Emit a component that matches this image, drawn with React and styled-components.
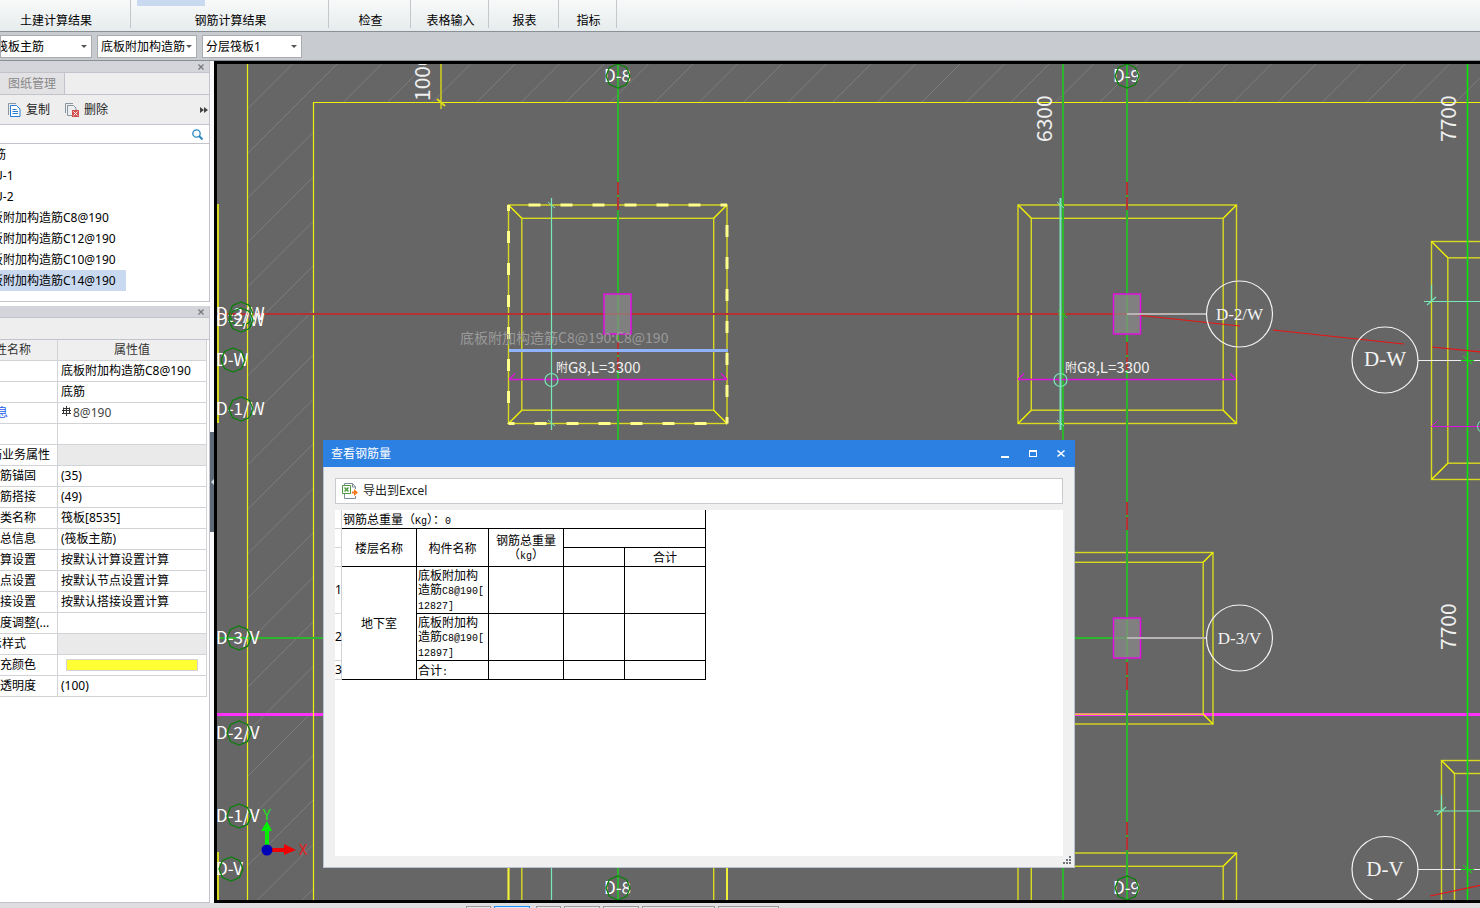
import { useId } from 'react';
import styled, { createGlobalStyle } from 'styled-components';

const ribbonGroups = [
  { label: '土建计算结果', width: 131, tail: 20 },
  { label: '钢筋计算结果', width: 198, active: true },
  { label: '检查', width: 82 },
  { label: '表格输入', width: 78 },
  { label: '报表', width: 70 },
  { label: '指标', width: 58 },
];

const components = [
  { name: '筋', shift: 6 },
  { name: 'U-1', shift: 6 },
  { name: 'U-2', shift: 6 },
  { name: '板附加构造筋C8@190', shift: 9 },
  { name: '板附加构造筋C12@190', shift: 9 },
  { name: '板附加构造筋C10@190', shift: 9 },
  { name: '板附加构造筋C14@190', shift: 9, selected: true },
];

const properties = [
  { name: '', value: '底板附加构造筋C8@190' },
  { name: '', value: '底筋' },
  { name: '息', shift: 4, value: '8@190', rebar: true },
  { name: '', value: '' },
  { name: '筋业务属性', shift: 10, group: true },
  { name: '筋锚固', value: '(35)' },
  { name: '筋搭接', value: '(49)' },
  { name: '类名称', value: '筏板[8535]' },
  { name: '总信息', value: '(筏板主筋)' },
  { name: '算设置', value: '按默认计算设置计算' },
  { name: '点设置', value: '按默认节点设置计算' },
  { name: '接设置', value: '按默认搭接设置计算' },
  { name: '度调整(...', value: '' },
  { name: '示样式', shift: 10, group: true },
  { name: '充颜色', swatch: true },
  { name: '透明度', value: '(100)' },
];

const statusButtons = [25, 36, 25, 36, 36, 73, 61];

export default function App() {
  return (
    <>
      <GlobalStyle />
      <Page>
        <Ribbon>
          {ribbonGroups.map(group => (
            <RibbonGroup key={group.label} $width={group.width} $tail={group.tail}>
              {group.active && <ActiveMark />}
              <RibbonButton type='button'>{group.label}</RibbonButton>
            </RibbonGroup>
          ))}
        </Ribbon>
        <FilterBar>
          <Combo label='构件类型' value='筏板主筋' width={92} shift={8} />
          <Combo label='构件' value='底板附加构造筋' width={100} />
          <Combo label='分层' value='分层筏板1' width={100} />
        </FilterBar>
        <Workspace>
          <Sidebar>
            <ComponentPanel />
            <PropertyPanel />
          </Sidebar>
          <Splitter>
            <Handle type='button' aria-label='折叠'>
              <svg width='3' height='6'><path d='M3 0v6L0 3z' fill='#d5dae0' /></svg>
            </Handle>
          </Splitter>
          <Viewport>
            <Drawing />
            <ResultDialog />
          </Viewport>
        </Workspace>
        <StatusBar>
          {statusButtons.map((width, i) => <StatusButton key={i} $width={width} $active={i === 1} />)}
        </StatusBar>
      </Page>
    </>
  );
}

function Combo({ label, value, width, shift = 0 }) {
  return (
    <ComboStyle $width={width} $shift={shift}>
      <select aria-label={label}><option>{value}</option></select>
    </ComboStyle>
  );
}

function PanelHeader() {
  return (
    <PanelHeaderStyle>
      <button type='button' aria-label='关闭'>
        <svg width='6' height='6'><path d='M.5.5l5 5M5.5.5l-5 5' stroke='#777' strokeWidth='1.3' /></svg>
      </button>
    </PanelHeaderStyle>
  );
}

function ComponentPanel() {
  return (
    <Panel>
      <PanelHeader />
      <TabRow>
        <Tab type='button'>图纸管理</Tab>
      </TabRow>
      <ToolRow>
        <ToolButton type='button'>
          <svg width='13' height='14' fill='none'>
            <path d='M.5 12V.5H8' stroke='#8796a3' />
            <path d='M2.5 2.5h6l3.5 3.5v7.5h-9.5z' fill='#fff' stroke='#2b7cd3' />
            <path d='M4.5 6.5h4M4.5 8.5h5.5M4.5 10.5h5.5' stroke='#2b7cd3' />
          </svg>
          复制
        </ToolButton>
        <ToolButton type='button'>
          <svg width='14' height='14' fill='none'>
            <path d='M.5 10V.5H8M2.5 12.5v-10h6l2.5 2.5v2M2.5 12.5H7' stroke='#8796a3' />
            <path d='M7 7h7v7H7z' fill='#d25050' />
            <path d='M8.5 8.5l4 4M12.5 8.5l-4 4' stroke='#fff' />
          </svg>
          删除
        </ToolButton>
        <MoreButton type='button' aria-label='更多'>
          <svg width='8' height='6'><path d='M0 0l4 3-4 3zM4 0l4 3-4 3z' fill='#444' /></svg>
        </MoreButton>
      </ToolRow>
      <SearchRow>
        <input aria-label='搜索构件' />
        <svg width='11' height='11' fill='none' stroke='#2b86c0'>
          <circle cx='4.5' cy='4.5' r='3.7' strokeWidth='1.3' />
          <path d='M7 7l3.5 3.5' strokeWidth='2' />
        </svg>
      </SearchRow>
      <ComponentList>
        {components.map(item => (
          <ComponentItem key={item.name} $selected={item.selected} $shift={item.shift}>{item.name}</ComponentItem>
        ))}
      </ComponentList>
    </Panel>
  );
}

function PropertyPanel() {
  return (
    <Panel $grow>
      <PanelHeader />
      <Spacer />
      <PropertyTable>
        <thead>
          <tr>
            <NameCell as='th' $shift={5}>性名称</NameCell>
            <ValueCell as='th'>属性值</ValueCell>
          </tr>
        </thead>
        <tbody>
          {properties.map((row, i) => (
            <tr key={i}>
              <NameCell $shift={row.shift} $link={row.rebar}>{row.name}</NameCell>
              <ValueCell $group={row.group} $muted={row.rebar}>
                {row.rebar && <RebarSign />}
                {row.swatch ? <Swatch /> : row.value}
              </ValueCell>
            </tr>
          ))}
        </tbody>
      </PropertyTable>
    </Panel>
  );
}

function RebarSign() {
  return (
    <svg width='11' height='11' fill='none' stroke='#333'>
      <path d='M5.5 0v10M2.5 1.5v6M8.5 1.5v6M2.5 2.5h6M1 4.5h9M1 7.5h9' />
    </svg>
  );
}

function ResultDialog() {
  return (
    <Dialog role='dialog' aria-label='查看钢筋量'>
      <TitleBar>
        <h1>查看钢筋量</h1>
        <WindowButton type='button' aria-label='最小化'>
          <svg width='10' height='10'><path d='M1 7h8v2H1z' fill='#fff' /></svg>
        </WindowButton>
        <WindowButton type='button' aria-label='最大化'>
          <svg width='10' height='10'><path d='M1 1h8v7H1zM2 3v4h6V3z' fill='#fff' fillRule='evenodd' /></svg>
        </WindowButton>
        <WindowButton type='button' aria-label='关闭'>
          <svg width='10' height='10'><path d='M1.5 1.5l7 6M8.5 1.5l-7 6' stroke='#fff' strokeWidth='1.6' /></svg>
        </WindowButton>
      </TitleBar>
      <DialogBody>
        <DialogTools>
          <ToolButton type='button'>
            <svg width='16' height='16' fill='none'>
              <path d='M2.5 2.5v-2h8L13.5 4v2M13.5 13v2.500H2.5V11' fill='#fff' stroke='#7d8c99' />
              <path d='M10.5 .5V4h3' stroke='#7d8c99' />
              <path d='M.5 2.5h8v8h-8z' fill='#fff' stroke='#4c9a3d' />
              <path d='M2.5 4.5l4 4M6.5 4.5l-4 4' stroke='#4c9a3d' strokeWidth='1.5' />
              <path d='M10 8.5h2V6l4 3.5-4 3.5v-2.5h-2z' fill='#f47b20' />
            </svg>
            导出到Excel
          </ToolButton>
        </DialogTools>
        <Sheet>
          <ResultTable>
            <colgroup>
              <col width='7' /><col width='75' /><col width='72' />
              <col width='75' /><col width='61' /><col width='81' />
            </colgroup>
            <thead>
              <Row $height={19}>
                <Index />
                <Cell colSpan='5'>钢筋总重量（<Latin>Kg</Latin>）：<Latin>0</Latin></Cell>
              </Row>
              <Row $height={19}>
                <Index />
                <Cell as='th' rowSpan='2'>楼层名称</Cell>
                <Cell as='th' rowSpan='2'>构件名称</Cell>
                <Cell as='th' rowSpan='2'>钢筋总重量<br />（<Latin>kg</Latin>）</Cell>
                <Cell colSpan='2' />
              </Row>
              <Row $height={19}>
                <Index />
                <Cell />
                <Cell as='th'>合计</Cell>
              </Row>
            </thead>
            <tbody>
              <Row $height={47}>
                <Index>1</Index>
                <Cell as='th' rowSpan='3'>地下室</Cell>
                <Cell>底板附加构<br />造筋<Latin>C8@190[</Latin><br /><Latin>12827]</Latin></Cell>
                <Cell /><Cell /><Cell />
              </Row>
              <Row $height={47}>
                <Index>2</Index>
                <Cell>底板附加构<br />造筋<Latin>C8@190[</Latin><br /><Latin>12897]</Latin></Cell>
                <Cell /><Cell /><Cell />
              </Row>
              <Row $height={19}>
                <Index>3</Index>
                <Cell>合计<Latin>:</Latin></Cell>
                <Cell /><Cell /><Cell />
              </Row>
            </tbody>
          </ResultTable>
        </Sheet>
        <Grip width='8' height='8'>
          <path d='M6 0h2v2H6zM3 3h2v2H3zM6 3h2v2H6zM0 6h2v2H0zM3 6h2v2H3zM6 6h2v2H6z' fill='#70757c' />
        </Grip>
      </DialogBody>
    </Dialog>
  );
}

/* ---- model view ---- */

const YELLOW = '#d9d920';
const GREEN = '#2eb52e';
const MINT = '#78e8b8';
const PINK = '#e010e0';

const hatchLines = Array.from({ length: 42 }, (_, i) => 267.5 + i * 44.5);

const footings = [
  { x: 508.5, y: 205, w: 218.5, h: 218.5, inset: 13.3 },
  { x: 1018, y: 205, w: 218.5, h: 218.5, inset: 13.3 },
  { x: 1041, y: 552.5, w: 172, h: 171.5, inset: 9.8 },
  { x: 1431.5, y: 241.5, w: 238, h: 238, inset: 16.3 },
  { x: 1441.5, y: 760.5, w: 218, h: 218, inset: 13 },
  { x: 1018, y: 853, w: 218.5, h: 218.5, inset: 13.3 },
  { x: 508.5, y: 853, w: 218.5, h: 218.5, inset: 13.3 },
];

const axisLabels = [
  { text: 'D-8', x: 604, y: 76, cx: 618 },
  { text: 'D-9', x: 1113, y: 76, cx: 1127 },
  { text: 'D-8', x: 604, y: 888, cx: 618 },
  { text: 'D-9', x: 1113, y: 888, cx: 1127 },
  { text: 'D-3/W', x: 216, y: 314, cx: 241 },
  { text: 'D-2/W', x: 216, y: 320, cx: 241 },
  { text: 'D-W', x: 216, y: 360, cx: 233 },
  { text: 'D-1/W', x: 216, y: 409, cx: 241 },
  { text: 'D-3/V', x: 216, y: 638, cx: 239 },
  { text: 'D-2/V', x: 216, y: 733, cx: 239 },
  { text: 'D-1/V', x: 216, y: 816, cx: 239 },
  { text: 'D-V', x: 216, y: 869, cx: 231 },
];

const bubbles = [
  { text: 'D-2/W', x: 1239.5, y: 314 },
  { text: 'D-3/V', x: 1239.5, y: 638 },
  { text: 'D-W', x: 1385, y: 360 },
  { text: 'D-V', x: 1385, y: 869.5 },
];

const dimensions = [
  { text: '1000', x: 430, y: 101 },
  { text: '6300', x: 1052, y: 142 },
  { text: '7700', x: 1456, y: 142 },
  { text: '7700', x: 1456, y: 650 },
];

function Footing({ x, y, w, h, inset }) {
  const r = x + w;
  const b = y + h;
  return (
    <g fill='none' stroke={YELLOW} strokeWidth='1.4'>
      <rect x={x} y={y} width={w} height={h} />
      <rect x={x + inset} y={y + inset} width={w - inset * 2} height={h - inset * 2} />
      <path
        stroke='#f4f400'
        d={`M${x} ${y}l${inset} ${inset}M${r} ${y}l${-inset} ${inset}M${x} ${b}l${inset} ${-inset}M${r} ${b}l${-inset} ${-inset}`}
      />
    </g>
  );
}

function Octagon({ cx, cy }) {
  const points = Array.from({ length: 8 }, (_, i) => {
    const a = (i * Math.PI) / 4 + Math.PI / 2;
    return `${cx + 12 * Math.cos(a)},${cy + 12 * Math.sin(a)}`;
  }).join(' ');
  return <polygon points={points} fill='none' stroke='#0a800a' strokeWidth='1.3' />;
}

function RebarMark({ x, strong }) {
  return (
    <g fill='none' stroke={PINK}>
      <path d={`M${x} 379.5H${x + 218}`} strokeWidth='1.6' />
      <path d={`M${x} 379.5l6-6M${x + 218} 379.5l-6-6`} strokeWidth='1.2' />
      <path d={`M${x + 42.5} 198v232`} stroke={MINT} strokeWidth={strong ? 2 : 1.2} />
      <path d={`M${x + 39} 202l7 6M${x + 39} 420l7 6`} stroke={MINT} />
      <circle cx={x + 42.5} cy='380' r='6.5' stroke={MINT} strokeWidth='1.2' />
      <DimText x={x + 47} y='372' $size={12}>附</DimText>
      <DimText x={x + 59} y='373' $size={15}>G8,L=3300</DimText>
    </g>
  );
}

function Drawing() {
  const clip = useId();
  return (
    <Canvas aria-label='模型视图'>
      {/* the drawing keeps its own origin, shifted by the frame of the view */}
      <g transform='translate(-217 -64)'>
        <clipPath id={clip}><path d='M247 64H2400V102H313V1400H247z' /></clipPath>
        <g clipPath={`url(#${clip})`} stroke='#7c7c7c'>
          {hatchLines.map(c => <path key={c} d={`M${c - 40} 40L${c - 1400} 1400`} />)}
        </g>

        <path d='M217 714.5H2400' stroke='#ff2fff' strokeWidth='3' />
        <path d='M247.5 64V1400M2400 102.5H313.5V1400' fill='none' stroke='#f0f010' strokeWidth='1.2' />
        <path d='M441 64v45' stroke='#b5b52e' strokeWidth='2' />
        <path d='M437 99l8 7' stroke={YELLOW} strokeWidth='2' />
        <path d='M218 204v219M218 852v400' stroke={YELLOW} strokeWidth='2' />

        {footings.map((f, i) => <Footing key={i} {...f} />)}
        <path d='M508.5 868v400M727 868v400' stroke='#f0f03c' strokeWidth='2' />

        <path d='M618 64V1400M1063 64V1400M1127 64V1400M217 638H1127' stroke={GREEN} strokeWidth='2' />
        <path d='M1467.5 64V1400' stroke='#00f000' strokeWidth='1.5' />
        {[618, 1127].map(x => (
          <path key={x} d={`M${x} 182V1400`} stroke='#b43232' strokeWidth='2' strokeDasharray='13 2 13 132' />
        ))}
        <path d='M217 314H1127' stroke='#b43232' strokeWidth='2' />
        <path d='M1127 314L1240 326M1273 330L1404 344M1432 347L1500 354M1430 896L1500 881' stroke='#ea1414' strokeWidth='1.2' />

        {[[604, 294], [1113.5, 294], [1113.5, 618]].map(([x, y]) => (
          <rect key={`${x}-${y}`} x={x} y={y} width='27' height='40' fill='#8c8c8c' fillOpacity='0.7' stroke={PINK} strokeWidth='1.5' />
        ))}
        <path d='M1127 314h80M1127 638h80' stroke='#b8b4b4' strokeWidth='2' />
        <path d='M1418 360.5h82M1418 869.5h82' stroke='#eee' />
        <path d='M1058 310l9 8M1058 314h8M1463 356l9 8M1463 865l9 8M1461 360.5h13M1461 869.5h13' stroke='#10e010' />

        <path
          d='M508.5 205v218.5M508.5 423.5h218.5'
          stroke='#ffff8c' strokeWidth='3' strokeDasharray='12 20' strokeDashoffset='6'
        />
        <path
          d='M508.5 205h218.5M727 205v218.5'
          stroke='#ffff8c' strokeWidth='3' strokeDasharray='12 20' strokeDashoffset='12'
        />
        <SelectionText x='460' y='343'>底板附加构造筋C8@190:C8@190</SelectionText>
        <path d='M509 350.5h219' stroke='#8fb3ff' strokeWidth='3' />
        <RebarMark x={509} />
        <RebarMark x={1018} strong />
        <path d='M551.5 868v400' stroke={MINT} strokeWidth='1.2' />
        <path d='M1424 301.5h80M1431.5 285v17M1427 305l9-8M1434 811h70M1441.5 795v16M1437 815l9-8' stroke={MINT} strokeWidth='1.2' />
        <path d='M1431.5 426.5h70M1431.5 426.5l6-6' stroke={PINK} />
        <circle cx='1484' cy='426.5' r='6.5' fill='none' stroke={MINT} />

        {axisLabels.map((l, i) => (
          <g key={i}>
            <AxisText x={l.x} y={l.y + 6}>{l.text}</AxisText>
            <Octagon cx={l.cx} cy={l.y} />
          </g>
        ))}
        {bubbles.map(b => (
          <g key={b.text}>
            <circle cx={b.x} cy={b.y} r='33' fill='none' stroke='#f4f4f4' strokeWidth='1.2' />
            <BubbleText x={b.x} y={b.y + 6} $wide={b.text.length > 3}>{b.text}</BubbleText>
          </g>
        ))}
        {dimensions.map((d, i) => (
          <DimText key={i} transform={`translate(${d.x} ${d.y}) rotate(-90)`} $size={21}>{d.text}</DimText>
        ))}

        <path d='M265 850v-19h-4l6-10 5 10h-3v19z' fill='#00f000' />
        <path d='M267 848h17v-4l12 6-12 5v-3h-17z' fill='#f00000' />
        <circle cx='267' cy='850' r='5.5' fill='#0000b8' />
        <AxisMark x='267' y='820' fill='#20e020'>Y</AxisMark>
        <AxisMark x='303' y='855' fill='#e82020'>X</AxisMark>
      </g>
    </Canvas>
  );
}

/* ---- styles ---- */

const uiFont = `'Noto Sans', 'Noto Sans CJK SC', sans-serif`;

const GlobalStyle = createGlobalStyle`
  * {
    box-sizing: border-box;
  }

  body {
    margin: 0;
    overflow: hidden;
    font: 12px/20px ${uiFont};
    color: #000;
  }

  button, select, input {
    margin: 0;
    padding: 0;
    border: none;
    background: none;
    font: inherit;
    color: inherit;
  }

  svg {
    flex: none;
  }
`;

const Page = styled.div`
  display: flex;
  flex-direction: column;
  height: 100vh;
  background: #fff;
`;

const Ribbon = styled.nav`
  flex: none;
  display: flex;
  height: 32px;
  background: linear-gradient(#f8fafa, #e6ebec);
  border-bottom: 1px solid #899196;
`;

const RibbonGroup = styled.div`
  display: flex;
  flex-direction: column;
  justify-content: flex-end;
  align-items: center;
  width: ${props => props.$width}px;
  height: 28px;
  padding: 0 ${props => props.$tail || 0}px 0 2px;
  border-right: 1px solid #c4c8ca;
`;

const ActiveMark = styled.span`
  align-self: flex-start;
  width: 68px;
  height: 6px;
  margin: 0 0 auto 4px;
  background: #c9d9f0;
`;

const RibbonButton = styled.button`
  height: 14px;
  line-height: 14px;
`;

const FilterBar = styled.div`
  flex: none;
  display: flex;
  gap: 5px;
  height: 29px;
  padding-top: 3px;
  background: #c8ccd1;
  border-bottom: 1px solid #8b9095;
`;

const ComboStyle = styled.div`
  position: relative;
  width: ${props => props.$width}px;
  height: 23px;
  background: #fff;
  border: 1px solid #a9abae;
  overflow: hidden;

  select {
    appearance: none;
    width: 100%;
    height: 21px;
    margin-left: -${props => props.$shift}px;
    padding-left: 3px;
  }

  &::after {
    content: '';
    position: absolute;
    top: 9px;
    right: 4px;
    border: 3px solid transparent;
    border-top-color: #555;
    border-bottom: none;
    pointer-events: none;
  }
`;

const Workspace = styled.main`
  flex: 1;
  display: flex;
  min-height: 0;
`;

const Sidebar = styled.aside`
  flex: none;
  display: flex;
  flex-direction: column;
  gap: 4px;
  width: 210px;
`;

const Panel = styled.section`
  flex: ${props => (props.$grow ? 1 : 'none')};
  border-right: 1px solid #c3c4cb;
  border-bottom: 1px solid #c3c4cb;
  overflow: hidden;
`;

const PanelHeaderStyle = styled.header`
  display: flex;
  align-items: center;
  justify-content: flex-end;
  height: 12px;
  padding-right: 5px;
  background: #d4d5da;
  border-bottom: 1px solid #c3c4cb;

  button {
    display: flex;
  }
`;

const TabRow = styled.div`
  display: flex;
  height: 22px;
  background: #eee;
  border-bottom: 1px solid #c3c4cb;
`;

const Tab = styled.button`
  width: 65px;
  background: #e2e2e4;
  border-right: 1px solid #c3c4cb;
  color: #888;
`;

const ToolRow = styled.div`
  display: flex;
  align-items: center;
  gap: 15px;
  height: 30px;
  padding: 0 1px 0 8px;
  background: #eee;
  border-bottom: 1px solid #c3c4cb;
`;

const ToolButton = styled.button`
  display: flex;
  align-items: center;
  gap: 5px;
  color: #222;
`;

const MoreButton = styled.button`
  display: flex;
  margin-left: auto;
`;

const SearchRow = styled.label`
  display: flex;
  align-items: center;
  height: 19px;
  padding-right: 6px;
  border-bottom: 1px solid #c3c4cb;

  input {
    flex: 1;
    min-width: 0;
    height: 16px;
    outline: none;
  }
`;

const ComponentList = styled.ul`
  height: 157px;
  margin: 0;
  padding: 0;
  list-style: none;
`;

const ComponentItem = styled.li`
  width: 126px;
  height: 21px;
  line-height: 21px;
  text-indent: -${props => props.$shift}px;
  white-space: nowrap;
  background: ${props => (props.$selected ? '#c9d9f0' : 'transparent')};
`;

const Spacer = styled.div`
  height: 22px;
  background: #eee;
  border-bottom: 1px solid #c3c4cb;
`;

const PropertyTable = styled.table`
  width: 207px;
  table-layout: fixed;
  border-collapse: separate;
  border-spacing: 0;

  td, th {
    height: 21px;
    padding: 0;
    line-height: 20px;
    border-right: 1px solid #d2d3d6;
    border-bottom: 1px solid #d2d3d6;
    white-space: nowrap;
  }

  th {
    background: #efefef;
    color: #333;
    font-weight: 400;
  }
`;

const NameCell = styled.td`
  width: 58px;
  text-align: left;
  text-indent: -${props => props.$shift || 0}px;
  color: ${props => (props.$link ? '#1f5cf0' : 'inherit')};
  overflow: hidden;
`;

const ValueCell = styled.td`
  background: ${props => (props.$group ? '#eaeaea' : 'transparent')};
  color: ${props => (props.$muted ? '#444' : 'inherit')};

  td& {
    padding-left: 3px;
  }

  svg {
    margin-right: 1px;
  }
`;

const Swatch = styled.div`
  width: 132px;
  height: 12px;
  margin-left: 5px;
  background: #ffff33;
  border: 1px solid #d2d3d6;
`;

const Splitter = styled.div`
  flex: none;
  display: flex;
  align-items: center;
  width: 4px;
  background: #fafafa;
`;

const Handle = styled.button`
  display: flex;
  align-items: center;
  justify-content: flex-end;
  width: 4px;
  height: 100px;
  background: #5f6a78;
`;

const Viewport = styled.div`
  position: relative;
  flex: 1;
  min-width: 0;
  border: 3px solid #000;
  border-right: none;
  background: #666;
  overflow: hidden;
`;

const Canvas = styled.svg`
  display: block;
  width: 100%;
  height: 100%;
`;

const AxisText = styled.text`
  font: 17px 'Noto Sans CJK SC', sans-serif;
  fill: #fff;
`;

const SelectionText = styled.text`
  font: 14px 'Noto Sans CJK SC', sans-serif;
  fill: #9a9a9a;
`;

const BubbleText = styled.text`
  font: ${props => (props.$wide ? 17 : 21)}px 'Liberation Serif', serif;
  text-anchor: middle;
  fill: #f4f4f4;
`;

const DimText = styled.text`
  font: ${props => props.$size}px 'Noto Sans CJK SC', sans-serif;
  fill: #f0f0f0;
  stroke: none;
`;

const AxisMark = styled.text`
  font: 15px 'Noto Sans CJK SC', sans-serif;
  text-anchor: middle;
`;

/* floats over the model view */
const Dialog = styled.section`
  position: absolute;
  top: 376px;
  left: 106px;
  display: flex;
  flex-direction: column;
  width: 752px;
  height: 428px;
  background: #f0f0f0;
`;

const TitleBar = styled.header`
  flex: none;
  display: flex;
  align-items: center;
  gap: 18px;
  height: 27px;
  padding: 0 9px 0 8px;
  background: #2c80e2;
  color: #fff;

  h1 {
    flex: 1;
    margin: 0;
    font-size: 12px;
    font-weight: 400;
  }
`;

const WindowButton = styled.button`
  display: flex;
`;

const DialogBody = styled.div`
  position: relative;
  flex: 1;
  display: flex;
  flex-direction: column;
  gap: 6px;
  padding: 11px;
  border: 1px solid #b9c3d0;
  border-top: none;
`;

const DialogTools = styled.div`
  flex: none;
  display: flex;
  height: 26px;
  padding-left: 6px;
  background: #fff;
  border: 1px solid #c8cad0;
`;

const Sheet = styled.div`
  flex: 1;
  background: #fff;
`;

const ResultTable = styled.table`
  width: 371px;
  table-layout: fixed;
  border-collapse: separate;
  border-spacing: 0;
  font: 12px/14px 'Noto Sans CJK SC', sans-serif;
`;

const Row = styled.tr`
  height: ${props => props.$height}px;
`;

const Cell = styled.td`
  padding: 0 0 0 1px;
  border-right: 1px solid #000;
  border-bottom: 1px solid #000;
  white-space: nowrap;

  th& {
    padding: 0;
    font-weight: 400;
  }
`;

const Index = styled.td`
  padding: 0;
  border-right: 1px solid #d2d3d6;
  border-bottom: 1px solid #d2d3d6;
  font-family: ${uiFont};
`;

const Latin = styled.span`
  font: 10px/10px 'Liberation Mono', monospace;
`;

const Grip = styled.svg`
  position: absolute;
  right: 3px;
  bottom: 3px;
`;

const StatusBar = styled.footer`
  flex: none;
  display: flex;
  align-items: flex-end;
  gap: 3px;
  height: 5px;
  padding-left: 466px;
  background: #dedee0;
`;

const StatusButton = styled.span`
  width: ${props => props.$width}px;
  height: 2px;
  margin-right: ${props => (props.$active ? 3 : 0)}px;
  background: #e8e8ea;
  border: 1px solid ${props => (props.$active ? '#1e90ff' : '#999')};
  border-bottom: none;
`;
